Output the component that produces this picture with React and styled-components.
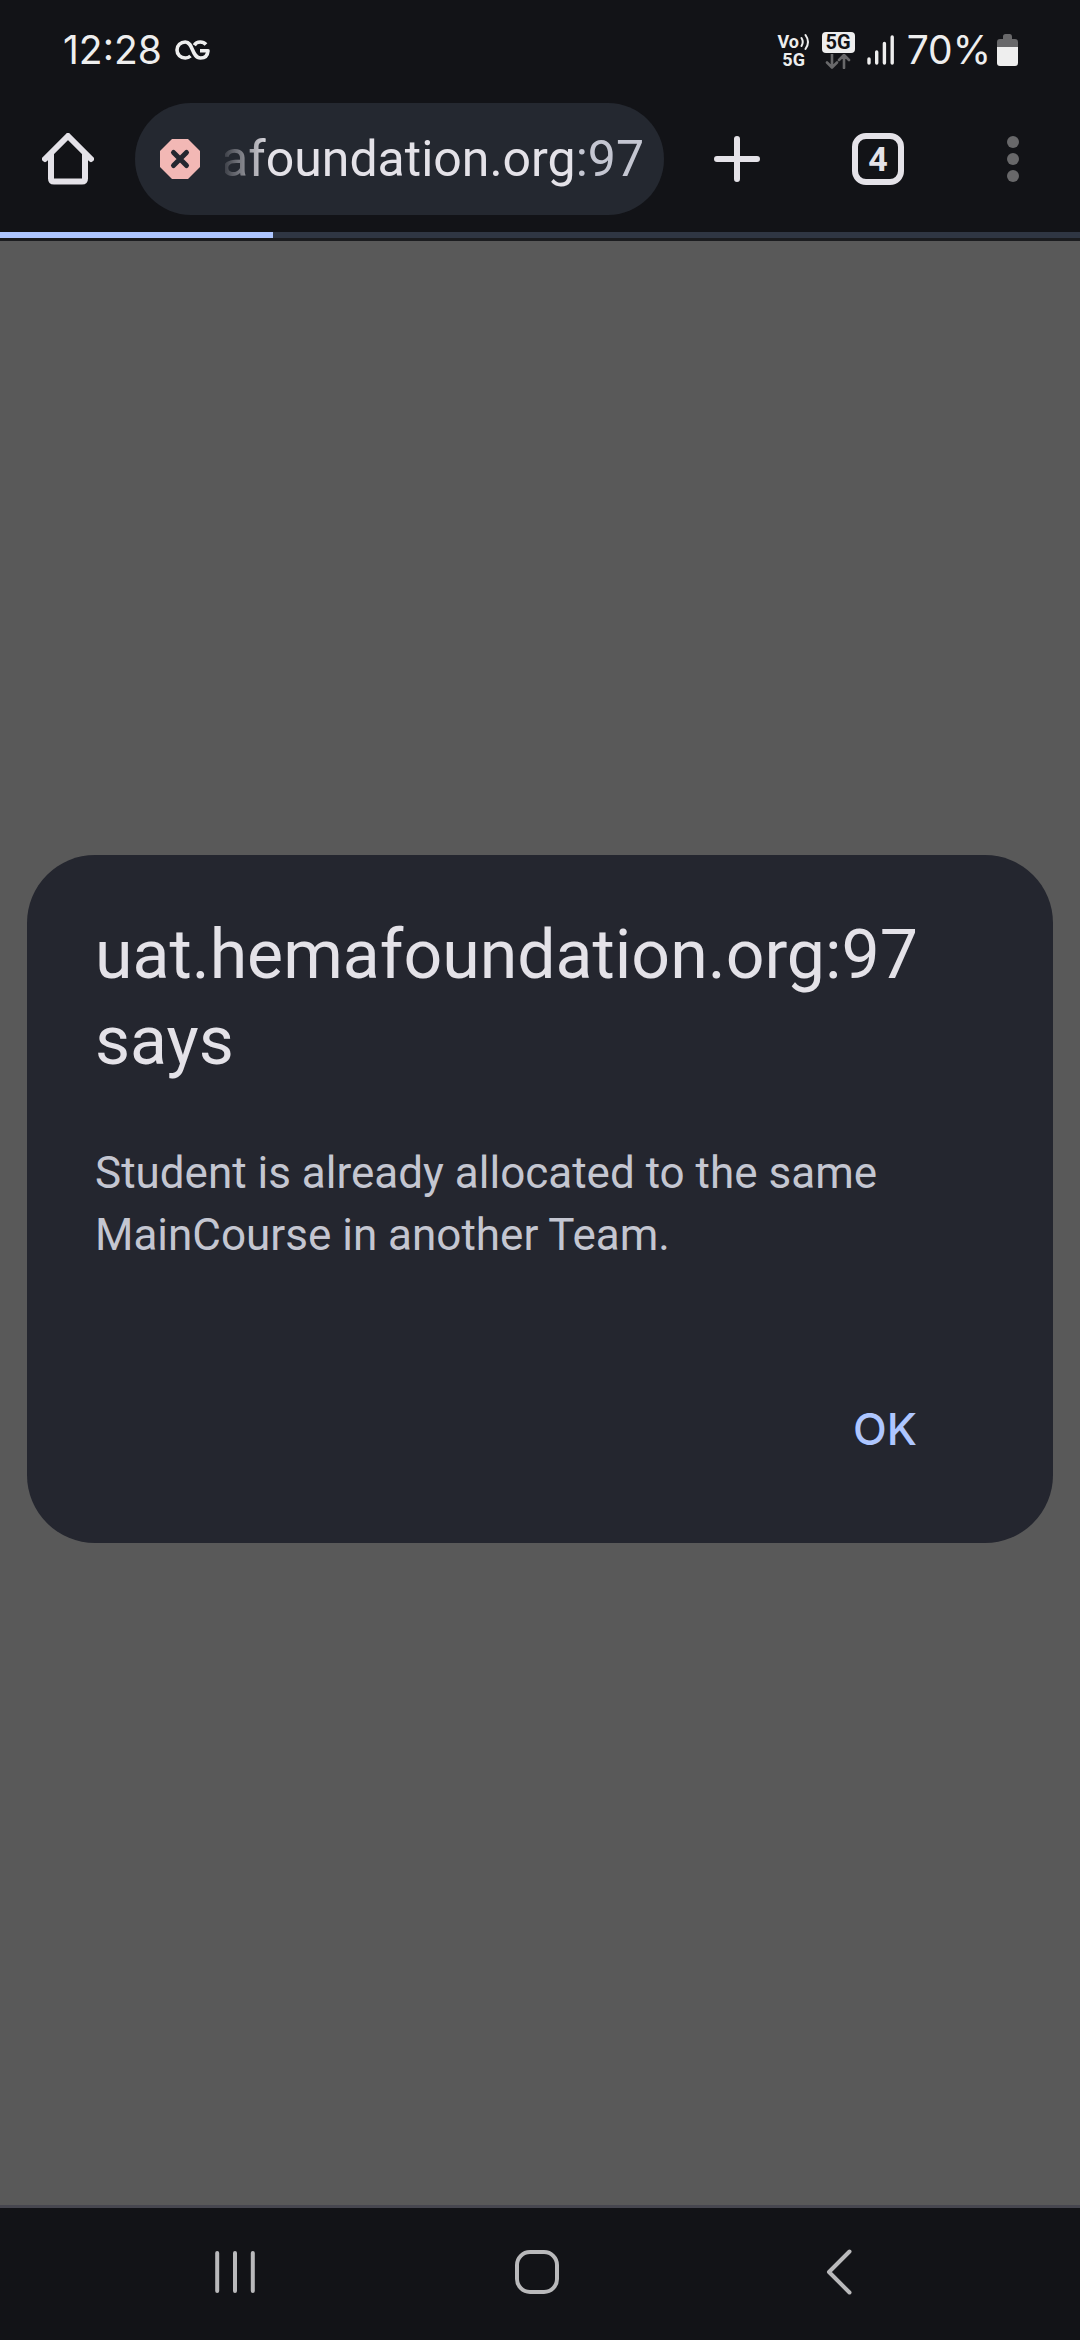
import React from 'react';
import styled, { createGlobalStyle } from 'styled-components';

const color = {
  bar: '#121317',
  pill: '#242830',
  icon: '#e4e2e8',
  status: '#eeeeee',
  muted: '#68686a',
  scrim: '#595959',
  dialog: '#24262f',
  body: '#c4c6d1',
  accent: '#aec6ff',
};

const GlobalStyle = createGlobalStyle`
  * { box-sizing: border-box; }
  body { margin: 0; background: ${color.bar}; font-family: Roboto, sans-serif; }
  button { border: 0; padding: 0; background: none; font: inherit; color: inherit; cursor: pointer; }
  svg { display: block; flex: none; }
`;

const Screen = styled.div`
  min-height: 100vh;
  display: flex;
  flex-direction: column;
`;

const StatusBar = styled.header`
  height: 86px;
  padding: 14px 62px 0 63px;
  display: flex;
  align-items: center;
  justify-content: space-between;
  color: ${color.status};
  font: 400 39px/44px Inter, sans-serif;
`;

const StatusGroup = styled.div`
  display: flex;
  align-items: center;
  gap: ${(p) => p.$gap}px;
`;

const VoiceBadge = styled.div`
  display: flex;
  flex-direction: column;
  align-items: center;
  width: 32px;
  font: 700 18px/17px Roboto, sans-serif;
`;

const VoiceRow = styled.span`
  display: flex;
  align-items: center;
  gap: 1px;
`;

const NetworkBadge = styled.div`
  display: flex;
  flex-direction: column;
  align-items: center;
  gap: 1px;
`;

const NetworkLabel = styled.span`
  width: 33px;
  border-radius: 4px;
  background: ${color.status};
  color: ${color.bar};
  text-align: center;
  font: 700 20px/21px Roboto, sans-serif;
`;

const Toolbar = styled.nav`
  height: 146px;
  display: flex;
  align-items: center;
`;

const ToolButton = styled.button`
  width: ${(p) => p.$width}px;
  height: 112px;
  display: flex;
  align-items: center;
  justify-content: center;
  color: ${(p) => (p.$muted ? color.muted : color.icon)};
`;

const AddressPill = styled.button`
  flex: 1;
  min-width: 0;
  height: 112px;
  padding: 0 20px 0 25px;
  display: flex;
  align-items: center;
  gap: 25px;
  border-radius: 56px;
  background: ${color.pill};
`;

const AddressText = styled.span`
  flex: 1;
  min-width: 0;
  display: flex;
  justify-content: flex-end;
  overflow: hidden;
  color: ${color.icon};
  font-size: 50px;
  line-height: 72px;
  white-space: nowrap;
  mask-image: linear-gradient(to right, rgba(0, 0, 0, 0.15), #000 44px);
`;

const Port = styled.span`
  color: ${color.body};
`;

const TabCount = styled.span`
  width: 52px;
  height: 52px;
  border: 6px solid ${color.icon};
  border-radius: 14px;
  font-size: 34px;
  font-weight: 700;
  line-height: 41px;
  text-align: center;
`;

const ProgressTrack = styled.div`
  height: 9px;
  border-bottom: 3px solid #1b1c1f;
  background: #2f3643;
`;

const ProgressFill = styled.div`
  height: 6px;
  background: ${color.accent};
`;

const Content = styled.main`
  flex: 1;
  padding: 0 27px 48px;
  display: flex;
  flex-direction: column;
  justify-content: center;
  background: ${color.scrim};
`;

const Dialog = styled.section`
  padding: 57px 68px 58px;
  display: flex;
  flex-direction: column;
  border-radius: 68px;
  background: ${color.dialog};
`;

const Title = styled.h1`
  margin: 0;
  color: ${color.icon};
  font-size: 68px;
  font-weight: 400;
  line-height: 86px;
`;

const Message = styled.p`
  margin: 58px 0 107px;
  color: ${color.body};
  font-size: 44px;
  line-height: 62px;
`;

const ConfirmButton = styled.button`
  align-self: flex-end;
  && {
    height: 112px;
    padding: 0 68px;
    color: ${color.accent};
    font: 500 44px/62px Inter, sans-serif;
  }
`;

const SystemNav = styled.footer`
  height: 135px;
  padding: 0 90px 4px 84px;
  border-top: 3px solid #46464f;
  display: flex;
`;

const NavButton = styled.button`
  flex: 1;
  display: flex;
  align-items: center;
  justify-content: center;
  color: #b9b9bb;
`;

const stroke = (width) => ({
  fill: 'none',
  stroke: 'currentColor',
  strokeWidth: width,
  strokeLinecap: 'round',
  strokeLinejoin: 'round',
});

const CarrierLogo = () => (
  <svg width="35" height="20" viewBox="0 0 35 20" aria-hidden="true">
    <path
      d="M15.500 16C14 17.400 12.300 18 10.300 18C5.600 18 2 14.500 2 10S5.600 2 10.300 2C18.500 2 16.500 18 25.500 18C29.800 18 32.600 15.300 33 10.800H25M31 4.500C29.500 2.800 27.700 2 25.200 2C22.500 2 20.500 3.200 19.300 5.200"
      {...stroke(3.6)}
      strokeLinecap="butt"
    />
  </svg>
);

const Waves = () => (
  <svg width="10" height="18" viewBox="0 0 10 18" aria-hidden="true">
    <path d="M1.500 5Q4 9 1.500 13M5.500 2Q10.500 9 5.500 16" {...stroke(2)} />
  </svg>
);

const DataArrows = () => (
  <svg width="26" height="15" viewBox="0 0 26 15" aria-hidden="true" color={color.muted}>
    <path d="M7 0V13M2 8.500L7 13.500L12 8.500M19 14V1.500M14 6L19 1L24 6" {...stroke(2.6)} />
  </svg>
);

const Signal = () => (
  <svg width="28" height="30" viewBox="0 0 28 30" aria-hidden="true">
    <path d="M2 24V28M9.700 17V28M17.400 8.500V28M25.200 2V28" {...stroke(3.4)} />
  </svg>
);

const Battery = () => (
  <svg width="21" height="32" viewBox="0 0 21 32" aria-hidden="true">
    <path d="M6 5V2.500Q6 0 8.500 0H13Q15 0 15 2.500V5H18Q21 5 21 8V13H0V8Q0 5 3 5Z" fill={color.muted} />
    <path d="M0 13H21V29Q21 32 18 32H3Q0 32 0 29Z" fill={color.status} />
  </svg>
);

const HomeIcon = () => (
  <svg width="52" height="52" viewBox="0 0 52 52" aria-hidden="true">
    <path
      d="M3 26L26 3L49 26M9 21V45.500Q9 48.500 12 48.500H40Q43 48.500 43 45.500V21"
      {...stroke(6)}
    />
  </svg>
);

const NotSecureIcon = () => (
  <svg width="40" height="40" viewBox="0 0 40 40" aria-hidden="true">
    <path d="M12 0H28L40 12V28L28 40H12L0 28V12Z" fill="#f2b8b5" />
    <path d="M13.500 13.500L26.500 26.500M26.500 13.500L13.500 26.500" {...stroke(5)} stroke={color.pill} />
  </svg>
);

const PlusIcon = () => (
  <svg width="46" height="46" viewBox="0 0 46 46" aria-hidden="true">
    <path d="M23 3V43M3 23H43" {...stroke(6)} />
  </svg>
);

const MenuIcon = () => (
  <svg width="12" height="46" viewBox="0 0 12 46" fill="currentColor" aria-hidden="true">
    {[6, 23, 40].map((y) => (
      <circle key={y} cx="6" cy={y} r="6" />
    ))}
  </svg>
);

const RecentsIcon = () => (
  <svg width="40" height="44" viewBox="0 0 40 44" aria-hidden="true">
    <path d="M2.200 3V41M20 3V41M37.800 3V41" {...stroke(4)} />
  </svg>
);

const HomeNavIcon = () => (
  <svg width="44" height="44" viewBox="0 0 44 44" aria-hidden="true">
    <rect x="2" y="2" width="40" height="40" rx="13" {...stroke(4)} />
  </svg>
);

const BackIcon = () => (
  <svg width="26" height="46" viewBox="0 0 26 46" aria-hidden="true">
    <path d="M23.500 2.500L3 23L23.500 43.500" {...stroke(4)} />
  </svg>
);

export default function App() {
  const progress = 273 / 1080;
  return (
    <Screen>
      <GlobalStyle />
      <StatusBar>
        <StatusGroup $gap={13}>
          <span>12:28</span>
          <CarrierLogo />
        </StatusGroup>
        <StatusGroup $gap={12}>
          <VoiceBadge>
            <VoiceRow>
              Vo
              <Waves />
            </VoiceRow>
            <span>5G</span>
          </VoiceBadge>
          <NetworkBadge>
            <NetworkLabel>5G</NetworkLabel>
            <DataArrows />
          </NetworkBadge>
          <Signal />
          <StatusGroup $gap={6}>
            <span>70%</span>
            <Battery />
          </StatusGroup>
        </StatusGroup>
      </StatusBar>

      <Toolbar aria-label="Browser toolbar">
        <ToolButton $width={135} aria-label="Home">
          <HomeIcon />
        </ToolButton>
        <AddressPill aria-label="Address">
          <NotSecureIcon />
          <AddressText>
            afoundation.org<Port>:97</Port>
          </AddressText>
        </AddressPill>
        <ToolButton $width={146} aria-label="New tab">
          <PlusIcon />
        </ToolButton>
        <ToolButton $width={136} aria-label="Switch tabs">
          <TabCount>4</TabCount>
        </ToolButton>
        <ToolButton $width={134} $muted aria-label="Menu">
          <MenuIcon />
        </ToolButton>
      </Toolbar>
      <ProgressTrack role="progressbar" aria-label="Page loading">
        <ProgressFill style={{ width: `${progress * 100}%` }} />
      </ProgressTrack>

      <Content>
        <Dialog role="alertdialog" aria-labelledby="dialog-title" aria-describedby="dialog-message">
          <Title id="dialog-title">uat.hemafoundation.org:97 says</Title>
          <Message id="dialog-message">
            Student is already allocated to the same MainCourse in another Team.
          </Message>
          <ConfirmButton>OK</ConfirmButton>
        </Dialog>
      </Content>

      <SystemNav>
        <NavButton aria-label="Recent apps">
          <RecentsIcon />
        </NavButton>
        <NavButton aria-label="Home screen">
          <HomeNavIcon />
        </NavButton>
        <NavButton aria-label="Back">
          <BackIcon />
        </NavButton>
      </SystemNav>
    </Screen>
  );
}
